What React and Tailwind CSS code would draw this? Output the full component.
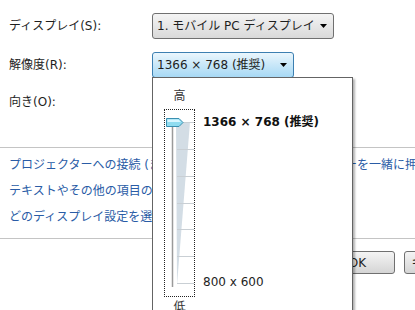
import React from 'react';

const font = { fontFamily: '"DejaVu Sans", "Noto Sans CJK JP", sans-serif' };

function Arrow() {
  return (
    <svg width="7" height="4" viewBox="0 0 7 4" className="shrink-0">
      <path d="M0 0 H7 L3.5 4 Z" fill="#000" />
    </svg>
  );
}

// vertical resolution slider drawing
function SliderArt() {
  const ticks = [122, 149, 176, 203, 229, 256, 283];
  return (
    <svg width="29" height="186" viewBox="165 110 29 186" className="block">
      <polygon points="176,122 190,122 177,285" fill="#d3dde5" />
      {ticks.map((y) => (
        <line key={y} x1="177" x2="194" y1={y + 0.5} y2={y + 0.5} stroke="#c9cfd4" strokeWidth="1" />
      ))}
      <line x1="172.5" x2="172.5" y1="124" y2="287" stroke="#9a9a9a" strokeWidth="1.5" />
      <path d="M166.5 118.5 H179 L183 122.5 L179 126.5 H166.5 Z" fill="#8fdcf0" stroke="#3a8fb0" strokeWidth="1" />
      <path d="M167.5 119.5 H178.5 L181 122 H167.5 Z" fill="#d8f6ff" />
    </svg>
  );
}

export default function App() {
  return (
    <div className="relative w-[415px] h-[310px] overflow-hidden bg-white text-[12px] text-[#1e1e1e]" style={font}>
      {/* settings rows */}
      <div className="pl-[9px] pt-[13px]">
        <div className="flex items-center h-[26px]">
          <span className="w-[143px]">ディスプレイ(S):</span>
          <div className="flex items-center justify-between w-[182px] h-[26px] px-[4px] pr-[6px] rounded-[3px] border border-[#707070] bg-gradient-to-b from-[#f4f4f4] to-[#d9d9d9]">
            <span>1. モバイル PC ディスプレイ</span>
            <Arrow />
          </div>
        </div>
        <div className="flex items-center h-[26px] mt-[13px]">
          <span className="w-[143px]">解像度(R):</span>
          <div className="flex items-center justify-between w-[142px] h-[26px] px-[4px] pr-[6px] rounded-[3px] border border-[#3c7fb1] bg-gradient-to-b from-[#eaf6fd] via-[#c8e7f8] to-[#a7d9f5]">
            <span>1366 × 768 (推奨)</span>
            <Arrow />
          </div>
        </div>
        <div className="flex items-center h-[26px] mt-[11px]">
          <span>向き(O):</span>
        </div>
      </div>

      {/* links */}
      <div className="mt-[32px] border-t border-[#c4c4c4] pt-[9px] pb-[13px] pl-[9px] flex flex-col gap-[10px] whitespace-nowrap text-[#2a5ca6]">
        <span className="leading-[16px]">プロジェクターへの接続 (または、Windows ロゴ キーと P キーを一緒に押す)</span>
        <span className="leading-[16px]">テキストやその他の項目の大きさの変更</span>
        <span className="leading-[16px]">どのディスプレイ設定を選択すればよいですか?</span>
      </div>

      {/* buttons */}
      <div className="border-t border-[#c4c4c4] pt-[12px] flex gap-[9px] pl-[320px]">
        <div className="shrink-0 w-[75px] h-[23px] rounded-[3px] border border-[#707070] bg-gradient-to-b from-[#f4f4f4] to-[#d5d5d5] flex items-center justify-center">OK</div>
        <div className="shrink-0 w-[75px] h-[23px] rounded-[3px] border border-[#707070] bg-gradient-to-b from-[#f4f4f4] to-[#d5d5d5] flex items-center justify-center">キャンセル</div>
      </div>

      {/* resolution dropdown popup */}
      <div className="absolute left-[152px] top-[77px] w-[201px] h-[260px] bg-white border border-[#646464] shadow-[2px_2px_2px_rgba(0,0,0,0.3)] flex">
        <div className="flex flex-col items-center ml-[11px] pt-[10px] w-[31px]">
          <span className="leading-[16px] text-[#333]">高</span>
          <div className="mt-[5px] border border-dotted border-[#222] w-[31px] h-[188px] p-0">
            <SliderArt />
          </div>
          <span className="leading-[16px] mt-[2px] text-[#333]">低</span>
        </div>
        <div className="flex flex-col ml-[8px] pt-[36px]">
          <span className="font-bold leading-[16px] text-[#111]">1366 × 768 (推奨)</span>
          <span className="leading-[16px] mt-[144px]">800 x 600</span>
        </div>
      </div>
    </div>
  );
}
